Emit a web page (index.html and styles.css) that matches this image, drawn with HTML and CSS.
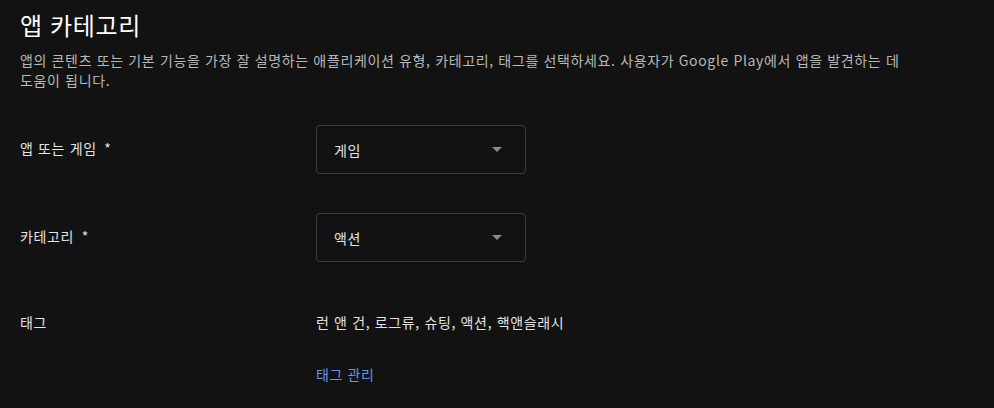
FILE: index.html
```html
<!DOCTYPE html>
<html lang="ko">
<head>
<meta charset="utf-8">
<link rel="stylesheet" href="styles.css">
</head>
<body>
<main class="page">
  <h1 class="title">앱 카테고리</h1>
  <p class="desc">앱의 콘텐츠 또는 기본 기능을 가장 잘 설명하는 애플리케이션 유형, 카테고리, 태그를 선택하세요. 사용자가 Google Play에서 앱을 발견하는 데 도움이 됩니다.</p>
  <div class="form">
    <div class="row">
      <div class="label">앱 또는 게임 <span class="req">*</span></div>
      <div class="select"><span class="value">게임</span><span class="arrow"></span></div>
    </div>
    <div class="row">
      <div class="label">카테고리 <span class="req">*</span></div>
      <div class="select"><span class="value">액션</span><span class="arrow"></span></div>
    </div>
    <div class="row tags-row">
      <div class="label">태그</div>
      <div class="tags">
        <div class="tag-list">런 앤 건, 로그류, 슈팅, 액션, 핵앤슬래시</div>
        <a class="link" href="#">태그 관리</a>
      </div>
    </div>
  </div>
</main>
</body>
</html>
```
FILE: styles.css
```css
html, body {
  margin: 0;
  padding: 0;
  background: #121212;
}
body {
  font-family: "Noto Sans CJK KR", "Noto Sans", Roboto, sans-serif;
  color: #e3e3e3;
  letter-spacing: 0.04em;
}
.page {
  padding: 9px 20px 0 20px;
}
.title {
  margin: 0;
  font-size: 24px;
  line-height: 32px;
  font-weight: 400;
  color: #ffffff;
}
.desc {
  margin: 9px 0 0 0;
  max-width: 893px;
  font-size: 14px;
  line-height: 20px;
  color: #b8b8b8;
}
.form {
  margin-top: 35px;
  display: flex;
  flex-direction: column;
  gap: 39px;
}
.row {
  display: grid;
  grid-template-columns: 296px 210px;
  align-items: center;
}
.label {
  font-size: 14px;
  line-height: 20px;
  color: #e3e3e3;
  margin-top: -4px;
}
.req {
  margin-left: 3px;
}
.select {
  box-sizing: border-box;
  height: 49px;
  border: 1px solid #3c3c3c;
  border-radius: 4px;
  display: flex;
  align-items: center;
  justify-content: space-between;
  padding: 0 23px 0 17px;
  font-size: 14px;
  color: #e3e3e3;
}
.arrow {
  width: 0;
  height: 0;
  border-left: 5px solid transparent;
  border-right: 5px solid transparent;
  border-top: 5px solid #8a8a8a;
}
.tags-row {
  margin-top: 11px;
  grid-template-columns: 296px 1fr;
  align-items: start;
}
.tags-row .label {
  margin-top: 0;
}
.tags {
  display: flex;
  flex-direction: column;
  gap: 32px;
  font-size: 14px;
  line-height: 20px;
}
.tag-list {
  color: #e3e3e3;
}
.link {
  color: #5e97f0;
  text-decoration: none;
}
```
